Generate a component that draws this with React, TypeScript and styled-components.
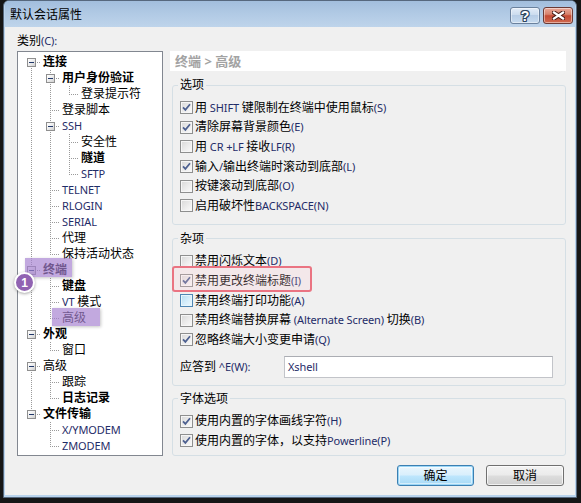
import React from "react";
import styled, { createGlobalStyle } from "styled-components";

const GlobalStyle = createGlobalStyle`
  html, body { margin: 0; padding: 0; background: #161616; }
  body {
    font-family: "Noto Sans", "Noto Sans CJK SC", sans-serif;
    font-size: 12px;
    color: #000;
  }
  * { box-sizing: border-box; }
`;

type TreeNode = {
  label: string;
  bold?: boolean;
  mark?: "term" | "adv";
  children?: TreeNode[];
};

const TREE: TreeNode[] = [
  {
    label: "连接",
    bold: true,
    children: [
      { label: "用户身份验证", bold: true, children: [{ label: "登录提示符" }] },
      { label: "登录脚本" },
      {
        label: "SSH",
        children: [{ label: "安全性" }, { label: "隧道", bold: true }, { label: "SFTP" }],
      },
      { label: "TELNET" },
      { label: "RLOGIN" },
      { label: "SERIAL" },
      { label: "代理" },
      { label: "保持活动状态" },
    ],
  },
  {
    label: "终端",
    bold: true,
    mark: "term",
    children: [{ label: "键盘", bold: true }, { label: "VT 模式" }, { label: "高级", mark: "adv" }],
  },
  { label: "外观", bold: true, children: [{ label: "窗口" }] },
  { label: "高级", children: [{ label: "跟踪" }, { label: "日志记录", bold: true }] },
  { label: "文件传输", bold: true, children: [{ label: "X/YMODEM" }, { label: "ZMODEM" }] },
];

type FlatRow = {
  node: TreeNode;
  guides: boolean[];
  hasNext: boolean;
  firstRoot: boolean;
};

function flatten(nodes: TreeNode[], guides: boolean[] = [], out: FlatRow[] = []): FlatRow[] {
  nodes.forEach((n, i) => {
    const hasNext = i < nodes.length - 1;
    out.push({ node: n, guides, hasNext, firstRoot: guides.length === 0 && i === 0 });
    if (n.children) flatten(n.children, [...guides, hasNext], out);
  });
  return out;
}

const OPTIONS: { label: string; checked: boolean }[] = [
  { label: "用 SHIFT 键限制在终端中使用鼠标(S)", checked: true },
  { label: "清除屏幕背景颜色(E)", checked: true },
  { label: "用 CR +LF 接收LF(R)", checked: false },
  { label: "输入/输出终端时滚动到底部(L)", checked: true },
  { label: "按键滚动到底部(O)", checked: false },
  { label: "启用破坏性BACKSPACE(N)", checked: false },
];

const MISC: { label: string; checked: boolean; hover?: boolean; marked?: boolean }[] = [
  { label: "禁用闪烁文本(D)", checked: false },
  { label: "禁用更改终端标题(I)", checked: true, marked: true },
  { label: "禁用终端打印功能(A)", checked: false, hover: true },
  { label: "禁用终端替换屏幕 (Alternate Screen) 切换(B)", checked: false },
  { label: "忽略终端大小变更申请(Q)", checked: true },
];

const FONT_OPTS = [
  { label: "使用内置的字体画线字符(H)", checked: true },
  { label: "使用内置的字体，以支持Powerline(P)", checked: true },
];

/* ---------- text helper ---------- */

const Latin = styled.span`
  color: #1f2c68;
  font-size: 11px;
  letter-spacing: -0.1px;
`;

const LATIN_RUN = /([\x00-\u02ff]+)/;

function Mixed({ text }: { text: string }) {
  const parts = text.split(LATIN_RUN).filter(Boolean);
  return (
    <>
      {parts.map((p, i) =>
        /^[\x00-\u02ff]+$/.test(p) ? <Latin key={i}>{p}</Latin> : <React.Fragment key={i}>{p}</React.Fragment>
      )}
    </>
  );
}

/* ---------- window chrome ---------- */

const Screen = styled.div`
  width: 581px;
  height: 503px;
  padding-left: 3px;
  overflow: hidden;
`;

const Window = styled.div`
  width: 574px;
  height: 498px;
  border: 1px solid #56687e;
  border-top-left-radius: 6px;
  border-top-right-radius: 6px;
  background: #b9d3ec;
  padding: 0 1px 2px 1px;
  display: flex;
  flex-direction: column;
  overflow: hidden;
`;

const TitleBar = styled.div`
  height: 26px;
  flex: none;
  display: flex;
  align-items: flex-start;
  justify-content: space-between;
  padding: 6px 2px 0 5px;
  background: linear-gradient(to bottom, #a2bedd 0%, #b0c9e4 45%, #bed4eb 100%);
`;

const Title = styled.div`
  line-height: 16px;
  font-size: 12px;
  color: #000;
`;

const CaptionButtons = styled.div`
  display: flex;
  gap: 3px;
`;

const CaptionButton = styled.div`
  width: 30px;
  height: 17px;
  border-radius: 3px;
  display: flex;
  align-items: center;
  justify-content: center;
  box-shadow: inset 0 0 0 1px rgba(255, 255, 255, 0.45);
`;

const HelpButton = styled(CaptionButton)`
  border: 1px solid #6a819d;
  background: linear-gradient(to bottom, #e3edf8 0%, #ccdcee 45%, #b7cde6 50%, #c7dbef 100%);
`;

const HelpGlyph = styled.span`
  font-family: "Liberation Sans", sans-serif;
  font-weight: 700;
  font-size: 14px;
  line-height: 14px;
  color: #fff;
  text-shadow: 1px 0 0 #2f4560, -1px 0 0 #2f4560, 0 1px 0 #2f4560, 0 -1px 0 #2f4560,
    1px 1px 0 #2f4560, -1px -1px 0 #2f4560, 1px -1px 0 #2f4560, -1px 1px 0 #2f4560;
`;

const CloseButton = styled(CaptionButton)`
  border: 1px solid #6b3a35;
  background: linear-gradient(to bottom, #e9a99a 0%, #d7826c 42%, #c44a34 52%, #cf6a50 100%);
`;

const Client = styled.div`
  flex: 1;
  background: #f0f0f0;
  padding: 6px 9px 9px 12px;
  display: flex;
  flex-direction: column;
`;

const CategoryLabel = styled.div`
  line-height: 16px;
  margin-bottom: 2px;
`;

const Main = styled.div`
  height: 405px;
  display: flex;
  gap: 7px;
`;

/* ---------- tree ---------- */

const Tree = styled.div`
  width: 146px;
  height: 405px;
  flex: none;
  background: #fff;
  border: 1px solid #828790;
  padding: 2px 0 0 4px;
`;

const TreeRow = styled.div`
  position: relative;
  height: 16px;
  display: flex;
  align-items: center;
`;

const Cell = styled.span<{ $up?: boolean; $down?: boolean; $h?: boolean }>`
  position: relative;
  flex: none;
  width: 19px;
  height: 16px;
  &::before {
    content: "";
    display: ${(p) => (p.$up || p.$down ? "block" : "none")};
    position: absolute;
    left: 9px;
    width: 1px;
    top: ${(p) => (p.$up ? "0" : "8px")};
    bottom: ${(p) => (p.$down ? "0" : "7px")};
    background: repeating-linear-gradient(to bottom, #9a9a9a 0 1px, transparent 1px 2px);
  }
  &::after {
    content: "";
    display: ${(p) => (p.$h ? "block" : "none")};
    position: absolute;
    top: 8px;
    left: 10px;
    width: 9px;
    height: 1px;
    background: repeating-linear-gradient(to right, transparent 0 1px, #9a9a9a 1px 2px);
  }
`;

const Expander = styled.span`
  position: absolute;
  z-index: 1;
  left: 5px;
  top: 4px;
  width: 9px;
  height: 9px;
  border: 1px solid #8f8f8f;
  background: linear-gradient(135deg, #ffffff 0%, #f0f0f0 45%, #cfcfcf 100%);
  &::after {
    content: "";
    position: absolute;
    left: 1px;
    top: 3px;
    width: 5px;
    height: 1px;
    background: #21386a;
  }
`;

const NodeLabel = styled.span<{ $bold?: boolean }>`
  margin-left: 2px;
  line-height: 16px;
  white-space: nowrap;
  font-weight: ${(p) => (p.$bold ? 700 : 400)};
`;

const Highlight = styled.span<{ $left: number; $top: number; $w: number; $h: number }>`
  position: absolute;
  z-index: 2;
  left: ${(p) => p.$left}px;
  top: ${(p) => p.$top}px;
  width: ${(p) => p.$w}px;
  height: ${(p) => p.$h}px;
  background: rgba(165, 128, 208, 0.68);
  box-shadow: 1px 1px 3px rgba(0, 0, 0, 0.22);
`;

const Badge = styled.span`
  position: absolute;
  z-index: 3;
  left: -8px;
  top: 10px;
  width: 21px;
  height: 21px;
  border-radius: 50%;
  background: #9163b2;
  border: 2px solid #fff;
  box-shadow: 0 1px 3px rgba(0, 0, 0, 0.35);
  color: #fff;
  font-family: "Liberation Sans", sans-serif;
  font-weight: 700;
  font-size: 12px;
  display: flex;
  align-items: center;
  justify-content: center;
`;

/* ---------- right panel ---------- */

const Panel = styled.div`
  width: 396px;
  flex: none;
  display: flex;
  flex-direction: column;
`;

const PanelHeader = styled.div`
  height: 20px;
  background: #fff;
  padding-left: 5px;
  line-height: 20px;
  font-size: 13px;
  font-weight: 700;
  color: #a3a3a3;
`;

const Group = styled.fieldset<{ $gap: number; $pb: number }>`
  margin: ${(p) => p.$gap}px 0 0 2px;
  width: 394px;
  min-inline-size: 0;
  border: 1px solid #d5dfe5;
  border-radius: 3px;
  padding: 5px 0 ${(p) => p.$pb}px 7px;
`;

const Legend = styled.legend`
  padding: 0 2px;
  margin-left: -2px;
  line-height: 16px;
  font-size: 12px;
`;

const CheckRow = styled.div`
  position: relative;
  height: 19.6px;
  display: flex;
  align-items: center;
`;

const CheckBox = styled.span<{ $hover?: boolean }>`
  flex: none;
  width: 13px;
  height: 13px;
  margin-right: 2px;
  border: 1px solid ${(p) => (p.$hover ? "#4f86b4" : "#8e8f8f")};
  box-shadow: inset 0 0 0 1px ${(p) => (p.$hover ? "#e6f6fd" : "#f6f6f6")};
  background: ${(p) =>
    p.$hover
      ? "linear-gradient(135deg, #b5dcf2 0%, #d6eefb 55%, #eef9ff 100%)"
      : "linear-gradient(135deg, #d8d8d8 0%, #ececec 55%, #fbfbfb 100%)"};
  display: flex;
  align-items: center;
  justify-content: center;
`;

const CheckLabel = styled.span`
  line-height: 16px;
  white-space: nowrap;
`;

const RedMark = styled.span`
  position: absolute;
  left: -8px;
  top: -5px;
  width: 140px;
  height: 26px;
  border: 2px solid #ea7482;
  border-radius: 3px;
  background: rgba(255, 205, 212, 0.22);
  pointer-events: none;
`;

const ReplyRow = styled.div`
  margin-top: 6px;
  height: 22px;
  display: flex;
  align-items: center;
`;

const ReplyLabel = styled.span`
  width: 104px;
  flex: none;
  line-height: 16px;
`;

const TextInput = styled.div`
  width: 269px;
  height: 22px;
  background: #fff;
  border: 1px solid #c2c4c9;
  border-top-color: #abadb3;
  padding-left: 3px;
  line-height: 20px;
`;

/* ---------- footer ---------- */

const Footer = styled.div`
  margin-top: 9px;
  height: 21px;
  display: flex;
  justify-content: flex-end;
  gap: 12px;
  padding-right: 2px;
`;

const PushButton = styled.div`
  width: 78px;
  height: 21px;
  border: 1px solid #707070;
  border-radius: 3px;
  background: linear-gradient(to bottom, #f3f3f3 0%, #ebebeb 48%, #dddddd 52%, #cfcfcf 100%);
  box-shadow: inset 0 0 0 1px rgba(255, 255, 255, 0.7);
  display: flex;
  align-items: center;
  justify-content: center;
  line-height: 16px;
`;

const DefaultButton = styled(PushButton)`
  width: 77px;
  border-color: #3c7fb1;
  background: linear-gradient(to bottom, #eaf6fd 0%, #d9effc 48%, #bee6fd 52%, #a7d9f5 100%);
  box-shadow: inset 0 0 0 1px #9ad6f7, inset 0 0 0 2px rgba(255, 255, 255, 0.5);
`;

function CheckMark() {
  return (
    <svg width="11" height="11" viewBox="0 0 11 11">
      <path d="M2 5.3 L4.4 7.9 L9 2.3" fill="none" stroke="#4d6090" strokeWidth="1.7" />
    </svg>
  );
}

function Check({ label, checked, hover, marked }: { label: string; checked: boolean; hover?: boolean; marked?: boolean }) {
  return (
    <CheckRow>
      <CheckBox $hover={hover}>{checked && <CheckMark />}</CheckBox>
      <CheckLabel>
        <Mixed text={label} />
      </CheckLabel>
      {marked && <RedMark />}
    </CheckRow>
  );
}

export default function App() {
  const rows = flatten(TREE);
  return (
    <>
      <GlobalStyle />
      <Screen>
        <Window>
          <TitleBar>
            <Title>默认会话属性</Title>
            <CaptionButtons>
              <HelpButton>
                <HelpGlyph>?</HelpGlyph>
              </HelpButton>
              <CloseButton>
                <svg width="13" height="9" viewBox="0 0 13 9">
                  <path d="M2 1.5 L11 7.5 M11 1.5 L2 7.5" stroke="#4a1e18" strokeWidth="4.2" strokeLinecap="square" />
                  <path d="M2 1.5 L11 7.5 M11 1.5 L2 7.5" stroke="#ffffff" strokeWidth="2.2" strokeLinecap="square" />
                </svg>
              </CloseButton>
            </CaptionButtons>
          </TitleBar>
          <Client>
            <CategoryLabel>
              类别<Latin>(C):</Latin>
            </CategoryLabel>
            <Main>
              <Tree>
                {rows.map((r, i) => (
                  <TreeRow key={i}>
                    {r.guides.map((g, j) => (
                      <Cell key={j} $up={g} $down={g} />
                    ))}
                    <Cell $up={!r.firstRoot} $down={r.hasNext} $h>
                      {r.node.children && <Expander />}
                    </Cell>
                    <NodeLabel $bold={r.node.bold}>
                      <Mixed text={r.node.label} />
                    </NodeLabel>
                    {r.node.mark === "term" && (
                      <>
                        <Highlight $left={3} $top={-4} $w={47} $h={19} />
                        <Badge>1</Badge>
                      </>
                    )}
                    {r.node.mark === "adv" && <Highlight $left={30} $top={-2} $w={48} $h={18} />}
                  </TreeRow>
                ))}
              </Tree>
              <Panel>
                <PanelHeader>终端 &gt; 高级</PanelHeader>
                <Group $gap={6} $pb={8}>
                  <Legend>选项</Legend>
                  {OPTIONS.map((o, i) => (
                    <Check key={i} label={o.label} checked={o.checked} />
                  ))}
                </Group>
                <Group $gap={6} $pb={7}>
                  <Legend>杂项</Legend>
                  {MISC.map((o, i) => (
                    <Check key={i} label={o.label} checked={o.checked} hover={o.hover} marked={o.marked} />
                  ))}
                  <ReplyRow>
                    <ReplyLabel>
                      <Mixed text="应答到 ^E(W):" />
                    </ReplyLabel>
                    <TextInput>
                      <Latin>Xshell</Latin>
                    </TextInput>
                  </ReplyRow>
                </Group>
                <Group $gap={5} $pb={4}>
                  <Legend>字体选项</Legend>
                  {FONT_OPTS.map((o, i) => (
                    <Check key={i} label={o.label} checked={o.checked} />
                  ))}
                </Group>
              </Panel>
            </Main>
            <Footer>
              <DefaultButton>确定</DefaultButton>
              <PushButton>取消</PushButton>
            </Footer>
          </Client>
        </Window>
      </Screen>
    </>
  );
}
